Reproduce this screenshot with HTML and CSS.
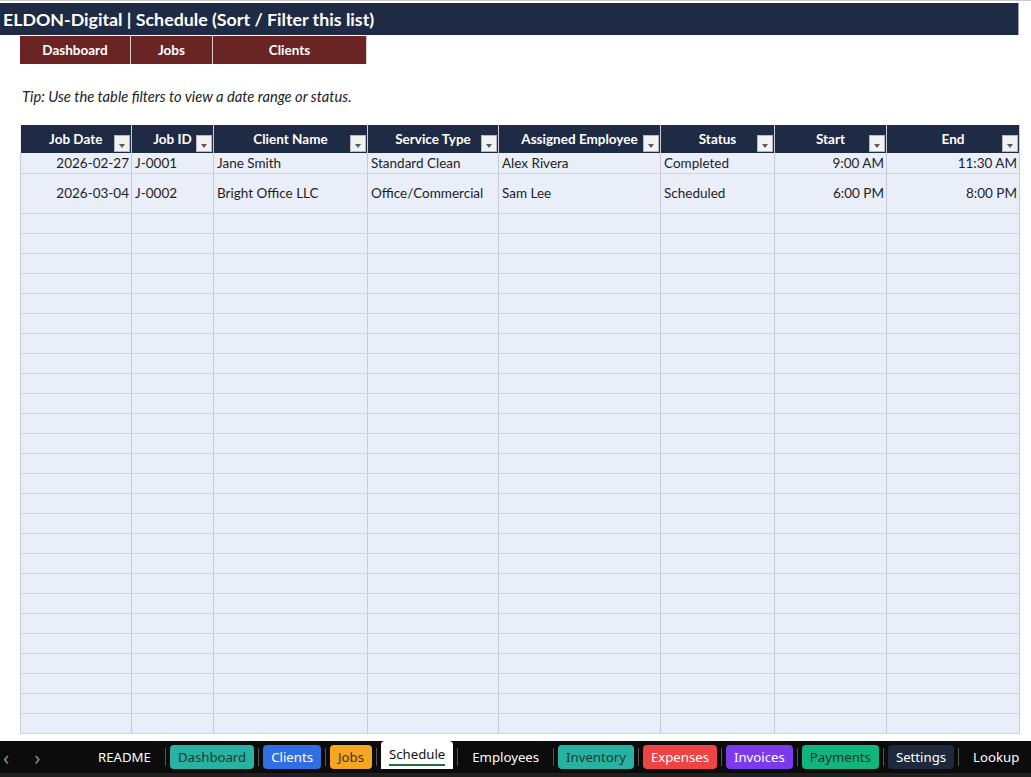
FILE: index.html
```html
<!DOCTYPE html>
<html>
<head>
<meta charset="utf-8">
<link rel="stylesheet" href="styles.css">
</head>
<body>
<div class="app">
  <div class="sheet">
    <div class="title">ELDON-Digital | Schedule (Sort / Filter this list)</div>
    <div class="nav">
      <div class="navbtn w1">Dashboard</div>
      <div class="navbtn w2">Jobs</div>
      <div class="navbtn w3">Clients</div>
    </div>
    <div class="tip">Tip: Use the table filters to view a date range or status.</div>
    <table class="grid">
      <colgroup>
        <col class="c1"><col class="c2"><col class="c3"><col class="c4"><col class="c5"><col class="c6"><col class="c7"><col class="c8">
      </colgroup>
      <thead>
        <tr>
          <th>Job Date<span class="flt"></span></th>
          <th>Job ID<span class="flt"></span></th>
          <th>Client Name<span class="flt"></span></th>
          <th>Service Type<span class="flt"></span></th>
          <th>Assigned Employee<span class="flt"></span></th>
          <th>Status<span class="flt"></span></th>
          <th>Start<span class="flt"></span></th>
          <th>End<span class="flt"></span></th>
        </tr>
      </thead>
      <tbody>
        <tr class="r1"><td class="rt">2026-02-27</td><td>J-0001</td><td>Jane Smith</td><td>Standard Clean</td><td>Alex Rivera</td><td>Completed</td><td class="rt">9:00 AM</td><td class="rt">11:30 AM</td></tr>
        <tr class="r2"><td class="rt">2026-03-04</td><td>J-0002</td><td>Bright Office LLC</td><td>Office/Commercial</td><td>Sam Lee</td><td>Scheduled</td><td class="rt">6:00 PM</td><td class="rt">8:00 PM</td></tr>
        <tr><td></td><td></td><td></td><td></td><td></td><td></td><td></td><td></td></tr>
        <tr><td></td><td></td><td></td><td></td><td></td><td></td><td></td><td></td></tr>
        <tr><td></td><td></td><td></td><td></td><td></td><td></td><td></td><td></td></tr>
        <tr><td></td><td></td><td></td><td></td><td></td><td></td><td></td><td></td></tr>
        <tr><td></td><td></td><td></td><td></td><td></td><td></td><td></td><td></td></tr>
        <tr><td></td><td></td><td></td><td></td><td></td><td></td><td></td><td></td></tr>
        <tr><td></td><td></td><td></td><td></td><td></td><td></td><td></td><td></td></tr>
        <tr><td></td><td></td><td></td><td></td><td></td><td></td><td></td><td></td></tr>
        <tr><td></td><td></td><td></td><td></td><td></td><td></td><td></td><td></td></tr>
        <tr><td></td><td></td><td></td><td></td><td></td><td></td><td></td><td></td></tr>
        <tr><td></td><td></td><td></td><td></td><td></td><td></td><td></td><td></td></tr>
        <tr><td></td><td></td><td></td><td></td><td></td><td></td><td></td><td></td></tr>
        <tr><td></td><td></td><td></td><td></td><td></td><td></td><td></td><td></td></tr>
        <tr><td></td><td></td><td></td><td></td><td></td><td></td><td></td><td></td></tr>
        <tr><td></td><td></td><td></td><td></td><td></td><td></td><td></td><td></td></tr>
        <tr><td></td><td></td><td></td><td></td><td></td><td></td><td></td><td></td></tr>
        <tr><td></td><td></td><td></td><td></td><td></td><td></td><td></td><td></td></tr>
        <tr><td></td><td></td><td></td><td></td><td></td><td></td><td></td><td></td></tr>
        <tr><td></td><td></td><td></td><td></td><td></td><td></td><td></td><td></td></tr>
        <tr><td></td><td></td><td></td><td></td><td></td><td></td><td></td><td></td></tr>
        <tr><td></td><td></td><td></td><td></td><td></td><td></td><td></td><td></td></tr>
        <tr><td></td><td></td><td></td><td></td><td></td><td></td><td></td><td></td></tr>
        <tr><td></td><td></td><td></td><td></td><td></td><td></td><td></td><td></td></tr>
        <tr><td></td><td></td><td></td><td></td><td></td><td></td><td></td><td></td></tr>
        <tr><td></td><td></td><td></td><td></td><td></td><td></td><td></td><td></td></tr>
        <tr><td></td><td></td><td></td><td></td><td></td><td></td><td></td><td></td></tr>
      </tbody>
    </table>
  </div>
  <div class="tabbar">
    <div class="arrows"><span class="arr">&lsaquo;</span><span class="arr">&rsaquo;</span></div>
    <div class="tab plain">README</div>
    <div class="sep"></div>
    <div class="tab pill teal">Dashboard</div>
    <div class="sep"></div>
    <div class="tab pill blue">Clients</div>
    <div class="sep"></div>
    <div class="tab pill orange">Jobs</div>
    <div class="sep"></div>
    <div class="tab active"><span class="ul">Schedule</span></div>
    <div class="sep"></div>
    <div class="tab plain">Employees</div>
    <div class="sep"></div>
    <div class="tab pill teal">Inventory</div>
    <div class="sep"></div>
    <div class="tab pill red">Expenses</div>
    <div class="sep"></div>
    <div class="tab pill purple">Invoices</div>
    <div class="sep"></div>
    <div class="tab pill green">Payments</div>
    <div class="sep"></div>
    <div class="tab pill navy">Settings</div>
    <div class="sep"></div>
    <div class="tab plain">Lookup</div>
  </div>
</div>
</body>
</html>
```
FILE: styles.css
```css
* { box-sizing: border-box; }
html, body { margin: 0; padding: 0; }
body {
  width: 1031px;
  height: 777px;
  overflow: hidden;
  background: #ffffff;
  font-family: Lato, "Liberation Sans", sans-serif;
  color: #222;
}
.app {
  display: flex;
  flex-direction: column;
  height: 777px;
}
.sheet {
  flex: 1;
  overflow: hidden;
  border-top: 1px solid #c9c9c9;
  padding-top: 2px;
}
.title {
  width: 1019px;
  height: 32px;
  background: #1f2a44;
  color: #ffffff;
  font-weight: 700;
  font-size: 17.8px;
  line-height: 32px;
  padding-left: 3px;
  white-space: nowrap;
  border-right: 1px solid #9aa0ad;
}
.nav {
  display: flex;
  margin-left: 20px;
  margin-top: 1px;
  height: 28px;
}
.navbtn {
  background: #6b2424;
  color: #ffffff;
  font-weight: 700;
  font-size: 13.5px;
  display: flex;
  align-items: center;
  justify-content: center;
  border-right: 1px solid #d9cccc;
}
.w1 { width: 111px; }
.w2 { width: 82px; }
.w3 { width: 154px; }
.tip {
  margin: 22px 0 0 22px;
  height: 20px;
  line-height: 20px;
  font-style: italic;
  font-size: 14.7px;
  color: #222;
}
.grid {
  margin: 19px 0 0 20px;
  border-collapse: collapse;
  table-layout: fixed;
  width: 999px;
  background: #e9eef8;
  font-size: 13.5px;
}
.c1 { width: 111px; }
.c2 { width: 82px; }
.c3 { width: 154px; }
.c4 { width: 131px; }
.c5 { width: 162px; }
.c6 { width: 114px; }
.c7 { width: 112px; }
.c8 { width: 133px; }
.grid th {
  position: relative;
  height: 28px;
  background: #1f2a44;
  color: #ffffff;
  font-weight: 700;
  font-size: 13.5px;
  text-align: center;
  padding: 0;
  border-right: 1px solid #c7cdd9;
  white-space: nowrap;
}
.flt {
  position: absolute;
  right: 1px;
  bottom: 1px;
  width: 16px;
  height: 17px;
  background: #f2f2f2;
  border: 1px solid #b9b9b9;
}
.flt::after {
  content: "";
  position: absolute;
  left: 4px;
  top: 8px;
  border-left: 3.5px solid transparent;
  border-right: 3.5px solid transparent;
  border-top: 4px solid #5a5a5a;
}
.grid td {
  height: 20px;
  padding: 0 3px;
  border-right: 1px solid #c4cad8;
  border-left: 1px solid #c4cad8;
  border-bottom: 1px solid #cdd3e0;
  white-space: nowrap;
  overflow: hidden;
  color: #1e1e1e;
}
.grid tr.r2 td { height: 40px; }
.grid td.rt { text-align: right; padding-right: 2px; }
.tabbar {
  height: 36px;
  flex: none;
  background: #0b0b0b;
  border-bottom: 4px solid #1f1f1f;
  padding-bottom: 4px;
  display: flex;
  align-items: flex-end;
  font-family: "Noto Sans", "Open Sans", sans-serif;
  font-size: 13.2px;
  color: #ffffff;
}
.arrows {
  flex: none;
  width: 88px;
  height: 24px;
  display: flex;
  align-items: center;
  gap: 25px;
  padding-left: 3px;
  color: #8a8a8a;
  font-size: 20px;
}
.tab {
  flex: none;
  display: flex;
  align-items: center;
  white-space: nowrap;
}
.plain { height: 24px; padding: 0 10px; }
.pill {
  height: 24px;
  padding: 0 8px;
  border-radius: 4px;
}
.teal { background: #28b2a2; color: #1a3a36; }
.blue { background: #2f6fe3; color: #ffffff; }
.orange { background: #f5a623; color: #4d3100; }
.red { background: #ee4444; color: #ffffff; }
.purple { background: #7c3aed; color: #ffffff; }
.green { background: #12b57e; color: #10372a; }
.navy { background: #1e293b; color: #ffffff; }
.active {
  height: 28px;
  background: #ffffff;
  color: #111;
  padding: 0 8px;
  border-radius: 4px 4px 0 0;
}
.ul {
  border-bottom: 2px solid #1e7145;
  padding-bottom: 1px;
}
.sep {
  flex: none;
  width: 1px;
  height: 18px;
  background: #555;
  margin: 0 4px 3px 4px;
}
```
